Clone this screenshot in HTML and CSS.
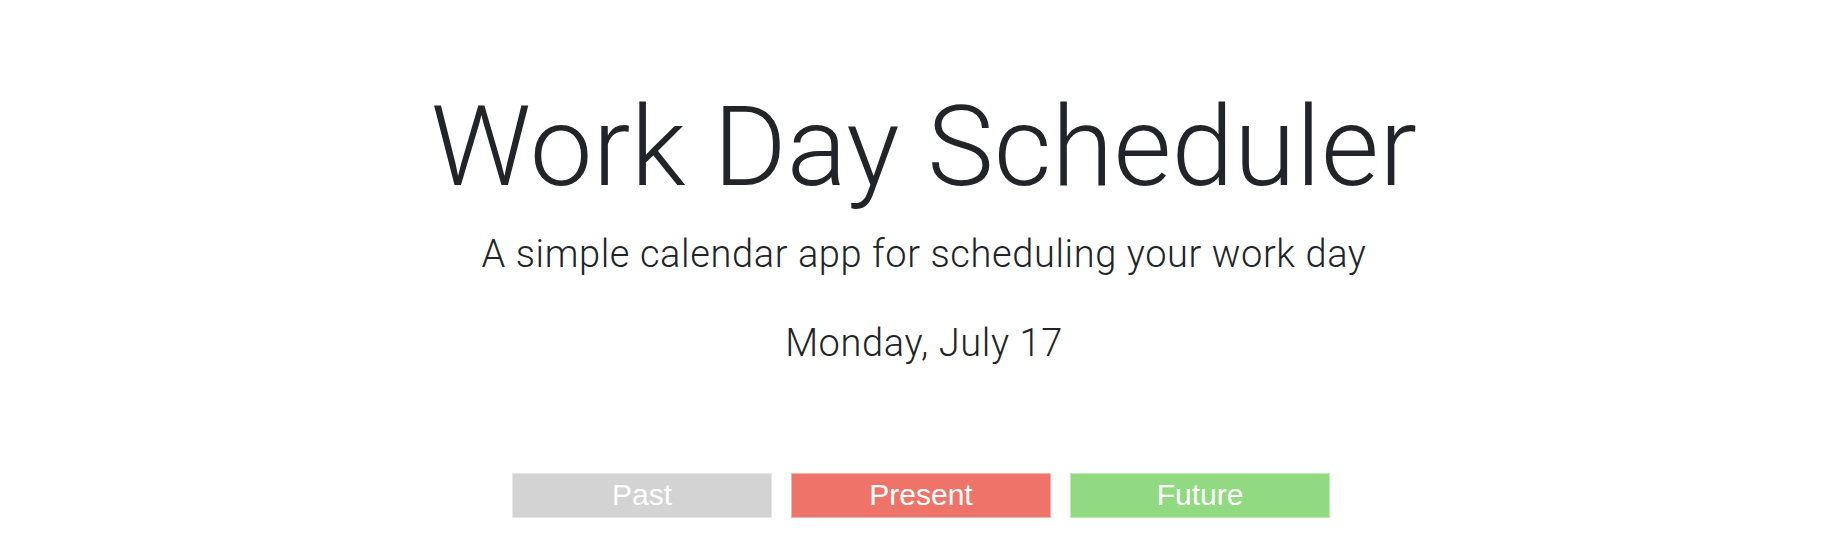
FILE: index.html
```html
<!DOCTYPE html>
<html lang="en">
<head>
<meta charset="utf-8">
<title>Work Day Scheduler</title>
<link rel="stylesheet" href="styles.css">
</head>
<body>
<header class="jumbotron">
  <h1 class="title">Work Day Scheduler</h1>
  <p class="lead">A simple calendar app for scheduling your work day</p>
  <p class="lead date">Monday, July 17</p>
</header>
<div class="legend">
  <div class="key past">Past</div>
  <div class="key present">Present</div>
  <div class="key future">Future</div>
</div>
</body>
</html>
```

FILE: styles.css
```css
html, body {
  margin: 0;
  padding: 0;
  background: #ffffff;
}

body {
  font-family: Roboto, "Liberation Sans", sans-serif;
  color: #212529;
}

.jumbotron {
  display: flex;
  flex-direction: column;
  align-items: center;
  padding-top: 80px;
}

.title {
  margin: 0;
  font-size: 112px;
  font-weight: 300;
  line-height: 1.2;
  letter-spacing: 0.2px;
}

.lead {
  margin: 18px 0 0;
  font-size: 38px;
  font-weight: 300;
  line-height: 1.2;
  letter-spacing: 0.6px;
}

.date {
  margin-top: 43px;
}

.legend {
  display: flex;
  justify-content: center;
  gap: 19px;
  margin-top: 106px;
  padding-right: 6px;
}

.key {
  width: 260px;
  height: 45px;
  box-sizing: border-box;
  border: 1px solid rgba(255, 255, 255, 0.45);
  display: flex;
  align-items: center;
  justify-content: center;
  font-family: "Liberation Sans", Arial, sans-serif;
  font-size: 30px;
  color: #ffffff;
}

.past { background: #d3d3d3; }
.present { background: #ee7369; }
.future { background: #91da82; }
```
